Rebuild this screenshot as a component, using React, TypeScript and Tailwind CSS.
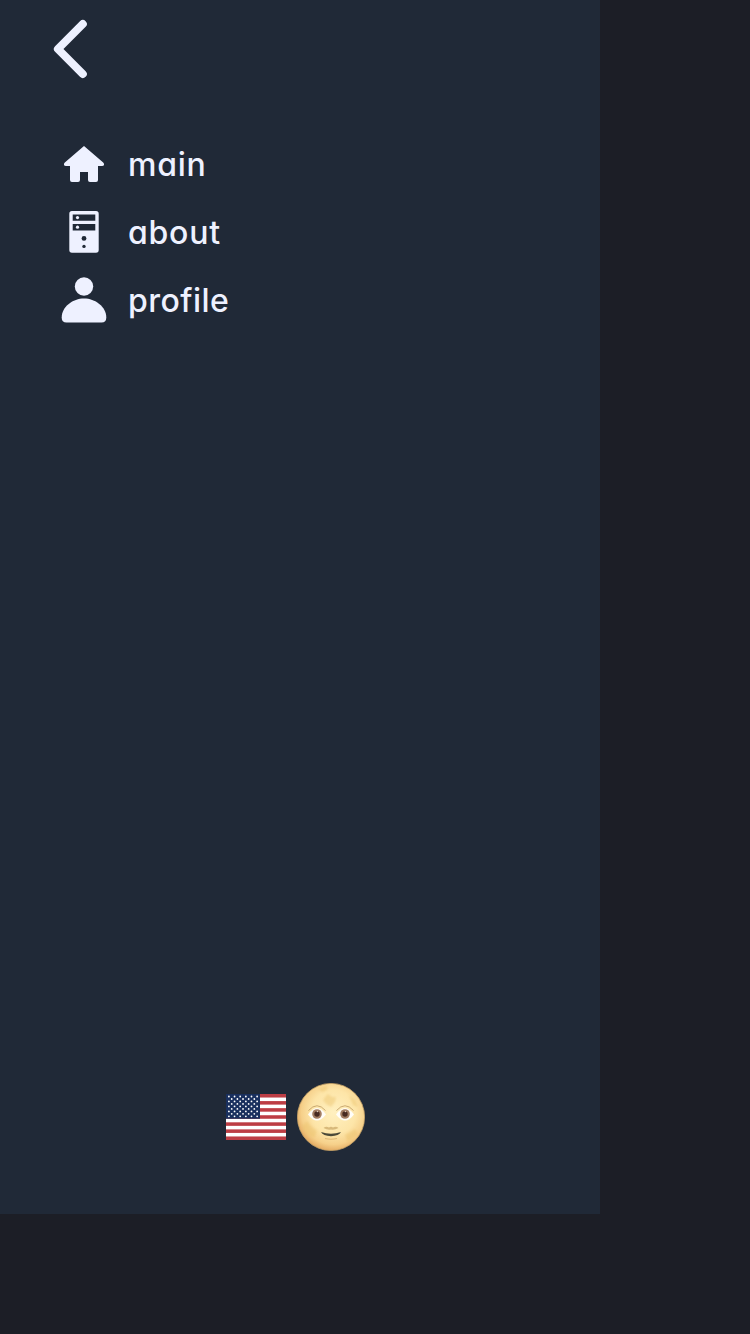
import React from "react";

const ICON = "#eef1ff";

function BackIcon() {
  return (
    <svg className="h-[60px] w-[36px]" viewBox="52 19 36 60" fill="none">
      <path d="M82.800 24 57.900 49 82.800 74" stroke={ICON} strokeWidth="8" strokeLinecap="round" strokeLinejoin="round" />
    </svg>
  );
}

function HomeIcon() {
  return (
    <svg className="h-12 w-12" viewBox="60 140 48 48" fill={ICON}>
      <path d="M84 146 103.2 162.6Q104.4 163.8 104 165Q103.6 166 102 166H98V180Q98 182 96 182H90Q88 182 88 180V172H80V180Q80 182 78 182H72Q70 182 70 180V166H66Q64.400 166 64 165Q63.600 163.800 64.800 162.600Z" />
    </svg>
  );
}

function TowerIcon() {
  return (
    <svg className="h-12 w-12" viewBox="60 208 48 48" fill={ICON}>
      <path
        fillRule="evenodd"
        d="M72 211H96Q98.700 211 98.700 213.700V250.100Q98.700 252.800 96 252.800H72Q69.300 252.800 69.300 250.100V213.700Q69.300 211 72 211ZM72.700 214.500V220.800H95.300V214.500ZM72.700 224V230.500H95.300V224Z"
      />
      <circle cx="77.500" cy="217.600" r="1.600" />
      <circle cx="77.500" cy="227.200" r="1.600" />
      <circle cx="84" cy="238.400" r="2.400" fill="#202937" />
      <circle cx="84" cy="246.400" r="1.700" fill="#202937" />
    </svg>
  );
}

function ProfileIcon() {
  return (
    <svg className="h-12 w-12" viewBox="60 276 48 48" fill={ICON}>
      <circle cx="84" cy="286.500" r="9.200" />
      <path d="M84 298.500C95 298.500 106.300 306.500 106.300 317.500Q106.300 322.500 101.500 322.500H66.500Q61.700 322.500 61.700 317.500C61.700 306.500 73 298.500 84 298.500Z" />
    </svg>
  );
}

function FlagIcon() {
  const stripe = 46 / 13;
  return (
    <svg className="h-[46px] w-[60px]" viewBox="0 0 60 46">
      <rect width="60" height="46" fill="#fff" />
      {[0, 2, 4, 6, 8, 10, 12].map((i) => (
        <rect key={i} y={i * stripe} width="60" height={stripe} fill="#bd3d44" />
      ))}
      <rect width="34" height={stripe * 7} fill="#192f5d" />
      {Array.from({ length: 9 }, (_, row) =>
        Array.from({ length: row % 2 ? 5 : 6 }, (_, col) => (
          <circle key={`${row}-${col}`} cx={2.9 + col * 5.65 + (row % 2 ? 2.82 : 0)} cy={2.5 + row * 2.48} r="0.9" fill="#fff" />
        )),
      )}
    </svg>
  );
}

function MoonFace() {
  return (
    <svg className="h-[68px] w-[68px]" viewBox="0 0 68 68">
      <defs>
        <radialGradient id="moon" cx="0.54" cy="0.43" r="0.6">
          <stop offset="0" stopColor="#fff0c0" />
          <stop offset="0.55" stopColor="#fde5a8" />
          <stop offset="0.8" stopColor="#f6d08a" />
          <stop offset="0.94" stopColor="#e6b068" />
          <stop offset="1" stopColor="#cf9650" />
        </radialGradient>
        <filter id="soft" x="-20%" y="-20%" width="140%" height="140%">
          <feGaussianBlur stdDeviation="0.8" />
        </filter>
        <filter id="fine" x="-20%" y="-50%" width="140%" height="200%">
          <feGaussianBlur stdDeviation="0.45" />
        </filter>
      </defs>
      <circle cx="34" cy="34" r="33.600" fill="url(#moon)" stroke="#c9a468" strokeWidth="0.8" />
      <g fill="#e9c067" opacity="0.42" filter="url(#soft)">
        <path d="M28 14 31 11 35 14 39 14 38 19 34 24 29 21 26 17Z" />
        <path d="M21 6 29 3 31 6 26 9Z" />
        <path d="M5 43 10 38 15 44 20 48 17 55 10 51Z" />
        <path d="M48 52 58 46 61 51 51 59Z" />
        <path d="M52 12 58 17 61 24 56 22Z" />
      </g>
      <g filter="url(#fine)">
        {[20, 48].map((x) => (
          <g key={x}>
            <path d={`M${x - 9} 31.500Q${x} 18.500 ${x + 9} 31.500Q${x} 43.500 ${x - 9} 31.500Z`} fill="#fffdf8" />
            <path d={`M${x - 8.5} 27.500Q${x} 18 ${x + 8.5} 27.500`} fill="none" stroke="#ae8750" strokeWidth="1" opacity="0.65" />
            <circle cx={x} cy="31" r="4.800" fill="#a17c62" />
            <circle cx={x} cy="31" r="2.700" fill="#472a20" />
            <circle cx={x + 0.4} cy="28.500" r="0.8" fill="#dccabb" />
          </g>
        ))}
        <path d="M26.500 45Q29 43 32 44.500Q34 43 36 44.500Q39 43 41.500 45Q37 47.500 34 46.500Q31 47.500 26.500 45Z" fill="#c8a565" opacity="0.7" />
        <path d="M24 49Q34 52.300 44 49Q42 53 34 53.200Q26 53 24 49Z" fill="#4c4a38" />
        <path d="M28 55.500Q34 57 40 55.500" stroke="#cba05e" strokeWidth="1.200" fill="none" opacity="0.6" />
      </g>
    </svg>
  );
}

const items = [
  { label: "main", Icon: HomeIcon, text: "tracking-[0.75px]" },
  { label: "about", Icon: TowerIcon, text: "tracking-[0.75px]" },
  { label: "profile", Icon: ProfileIcon, text: "tracking-[0.45px]" },
];

export default function App() {
  return (
    <div className="h-[1334px] w-[750px] overflow-hidden bg-[#1c1e26]">
      <aside className="flex h-[1214px] w-[600px] flex-col bg-[#202937]">
        <button className="ml-[52px] mt-[19px] w-[36px]" aria-label="Back">
          <BackIcon />
        </button>
        <nav className="ml-[60px] mt-[61px] flex flex-col gap-5">
          {items.map(({ label, Icon, text }) => (
            <a key={label} className="flex h-12 items-center gap-5">
              <Icon />
              <span
                className={`pt-0.5 font-['Inter','Liberation_Sans',sans-serif] text-[32px] font-[450] leading-[48px] text-[#eef1ff] [font-feature-settings:'cv11','ss03'] ${text}`}
              >
                {label}
              </span>
            </a>
          ))}
        </nav>
        <div className="mb-[63px] ml-[226px] mt-auto flex items-center gap-[11px]">
          <FlagIcon />
          <MoonFace />
        </div>
      </aside>
    </div>
  );
}
